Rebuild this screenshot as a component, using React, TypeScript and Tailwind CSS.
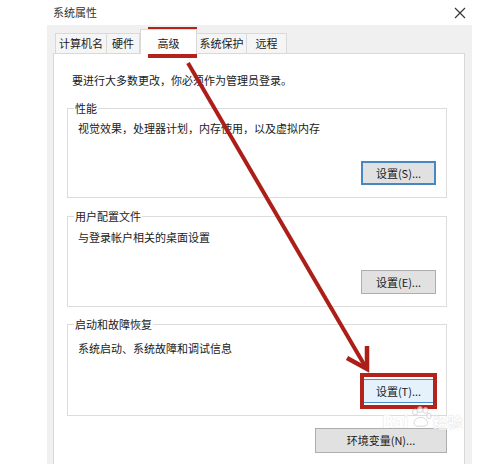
import React from "react"

const tabs = [
  { label: "计算机名", w: "w-[52px]" },
  { label: "硬件", w: "w-[33px]" },
  { label: "高级", w: "w-[57px]", active: true },
  { label: "系统保护", w: "w-[50px]" },
  { label: "远程", w: "w-[40px]" },
]

function WinButton({ label, variant = "normal" }: { label: string; variant?: "normal" | "focus" | "hover" }) {
  const look =
    variant === "focus"
      ? "bg-[#e1e1e1] border-2 border-[#4588c4]"
      : variant === "hover"
        ? "bg-[#e5f1fb] border border-[#4a92cf]"
        : "bg-[#e1e1e1] border border-[#adadad]"
  return (
    <div className={`w-[75px] h-[24px] flex items-center justify-center text-[11px] text-[#1a1a1a] ${look}`}>
      {label}
    </div>
  )
}

function Group({
  title,
  text,
  textTop,
  btnTop,
  className,
  children,
}: {
  title: string
  text: string
  textTop: string
  btnTop: string
  className: string
  children: React.ReactNode
}) {
  return (
    <fieldset className={`w-[380px] border border-[#dcdcdc] pb-[12px] flex flex-col ${className}`}>
      <legend className="ml-[6px] px-[1px] text-[11px] leading-[14px] text-[#222]">{title}</legend>
      <p className={`pl-[10px] text-[11px] leading-[16px] text-[#1a1a1a] ${textTop}`}>{text}</p>
      <div className={`self-end mr-[10px] ${btnTop}`}>{children}</div>
    </fieldset>
  )
}

export default function App() {
  return (
    <div className="relative w-[500px] h-[464px] overflow-hidden bg-white font-['Noto_Sans_CJK_SC','Microsoft_YaHei',sans-serif]">
      <div className="h-[25px] flex items-center justify-between pl-[53px] pr-[34px]">
        <span className="text-[11px] text-[#333]">系统属性</span>
        <svg width="12" height="12" viewBox="0 0 12 12">
          <path d="M1 1 L11 11 M11 1 L1 11" stroke="#333" strokeWidth="1.1" />
        </svg>
      </div>

      <div className="ml-[47px] mr-[28px] h-[450px] bg-[#f0f0f0] pl-[6px] pr-[7px] pt-[4px] flex flex-col">
        <div className="flex items-end h-[24px] pl-[2px]">
          {tabs.map((t, i) =>
            t.active ? (
              <div
                key={t.label}
                className={`relative z-10 -mb-px h-[25px] ${t.w} bg-white border-t border-l border-r border-[#d9d9d9] flex items-start justify-center pt-[6px] text-[11px] leading-[14px] text-[#1a1a1a]`}
              >
                {t.label}
              </div>
            ) : (
              <div
                key={t.label}
                className={`h-[20px] ${t.w} bg-[#f5f5f5] border-t border-r border-[#d9d9d9] ${i === 0 ? "border-l" : ""} flex items-center justify-center text-[11px] text-[#1a1a1a]`}
              >
                {t.label}
              </div>
            ),
          )}
        </div>

        <div className="flex-1 bg-white border border-[#d9d9d9] pl-[13px]">
          <div className="w-[380px] flex flex-col">
            <p className="mt-[18px] pl-[5px] text-[11px] leading-[16px] text-[#1a1a1a]">
              要进行大多数更改，你必须作为管理员登录。
            </p>

            <Group title="性能" text="视觉效果，处理器计划，内存使用，以及虚拟内存" textTop="mt-[5px]" btnTop="mt-[25px]" className="mt-[13px]">
              <WinButton label="设置(S)..." variant="focus" />
            </Group>

            <Group title="用户配置文件" text="与登录帐户相关的桌面设置" textTop="mt-[6px]" btnTop="mt-[25px]" className="mt-[11px]">
              <WinButton label="设置(E)..." />
            </Group>

            <Group title="启动和故障恢复" text="系统启动、系统故障和调试信息" textTop="mt-[9px]" btnTop="mt-[23px]" className="mt-[10px]">
              <div className="relative">
                <WinButton label="设置(T)..." variant="hover" />
                <div className="absolute -left-[1px] -right-[1px] -top-[6px] -bottom-[6px] border-[4px] border-[#b3231c]" />
              </div>
            </Group>

            <div className="self-end mt-[12px] w-[132px] h-[25px] bg-[#e1e1e1] border border-[#adadad] flex items-center justify-center text-[11px] text-[#1a1a1a]">
              环境变量(N)...
            </div>
          </div>
        </div>
      </div>

      {/* annotation: red box on tab + arrow */}
      <div className="absolute left-[148px] top-[27px] w-[49px] h-[31px] border-[4px] border-[#b3231c]" />
      <svg className="absolute left-0 top-0 pointer-events-none" width="500" height="464">
        <line x1="188" y1="63" x2="365" y2="366" stroke="#ac1f19" strokeWidth="4" />
        <polyline points="347,358 367,369 367,346" fill="none" stroke="#ac1f19" strokeWidth="4.5" strokeLinejoin="miter" />
      </svg>

      {/* watermark */}
      <div className="absolute left-[382px] top-[406px] flex items-end opacity-70 pointer-events-none">
        <span className="text-[17px] font-bold leading-none text-white [text-shadow:0_0_1px_#bbb]">Bai</span>
        <svg width="24" height="22" viewBox="0 0 24 22" className="mb-[1px]">
          <g fill="white" stroke="#c8c8c8" strokeWidth="1">
            <ellipse cx="6" cy="6" rx="2.5" ry="3" />
            <ellipse cx="11" cy="3.5" rx="2.5" ry="3" />
            <ellipse cx="16.5" cy="4.5" rx="2.5" ry="3" />
            <ellipse cx="20" cy="10" rx="2.2" ry="2.8" />
            <path d="M5 17 C5 11 15 9 18 15 C20 19 16 21 12 20 C8 21 5 20 5 17 Z" />
          </g>
        </svg>
        <span className="text-[15px] font-bold leading-none text-white [text-shadow:0_0_1px_#aaa]">经验</span>
      </div>
    </div>
  )
}
